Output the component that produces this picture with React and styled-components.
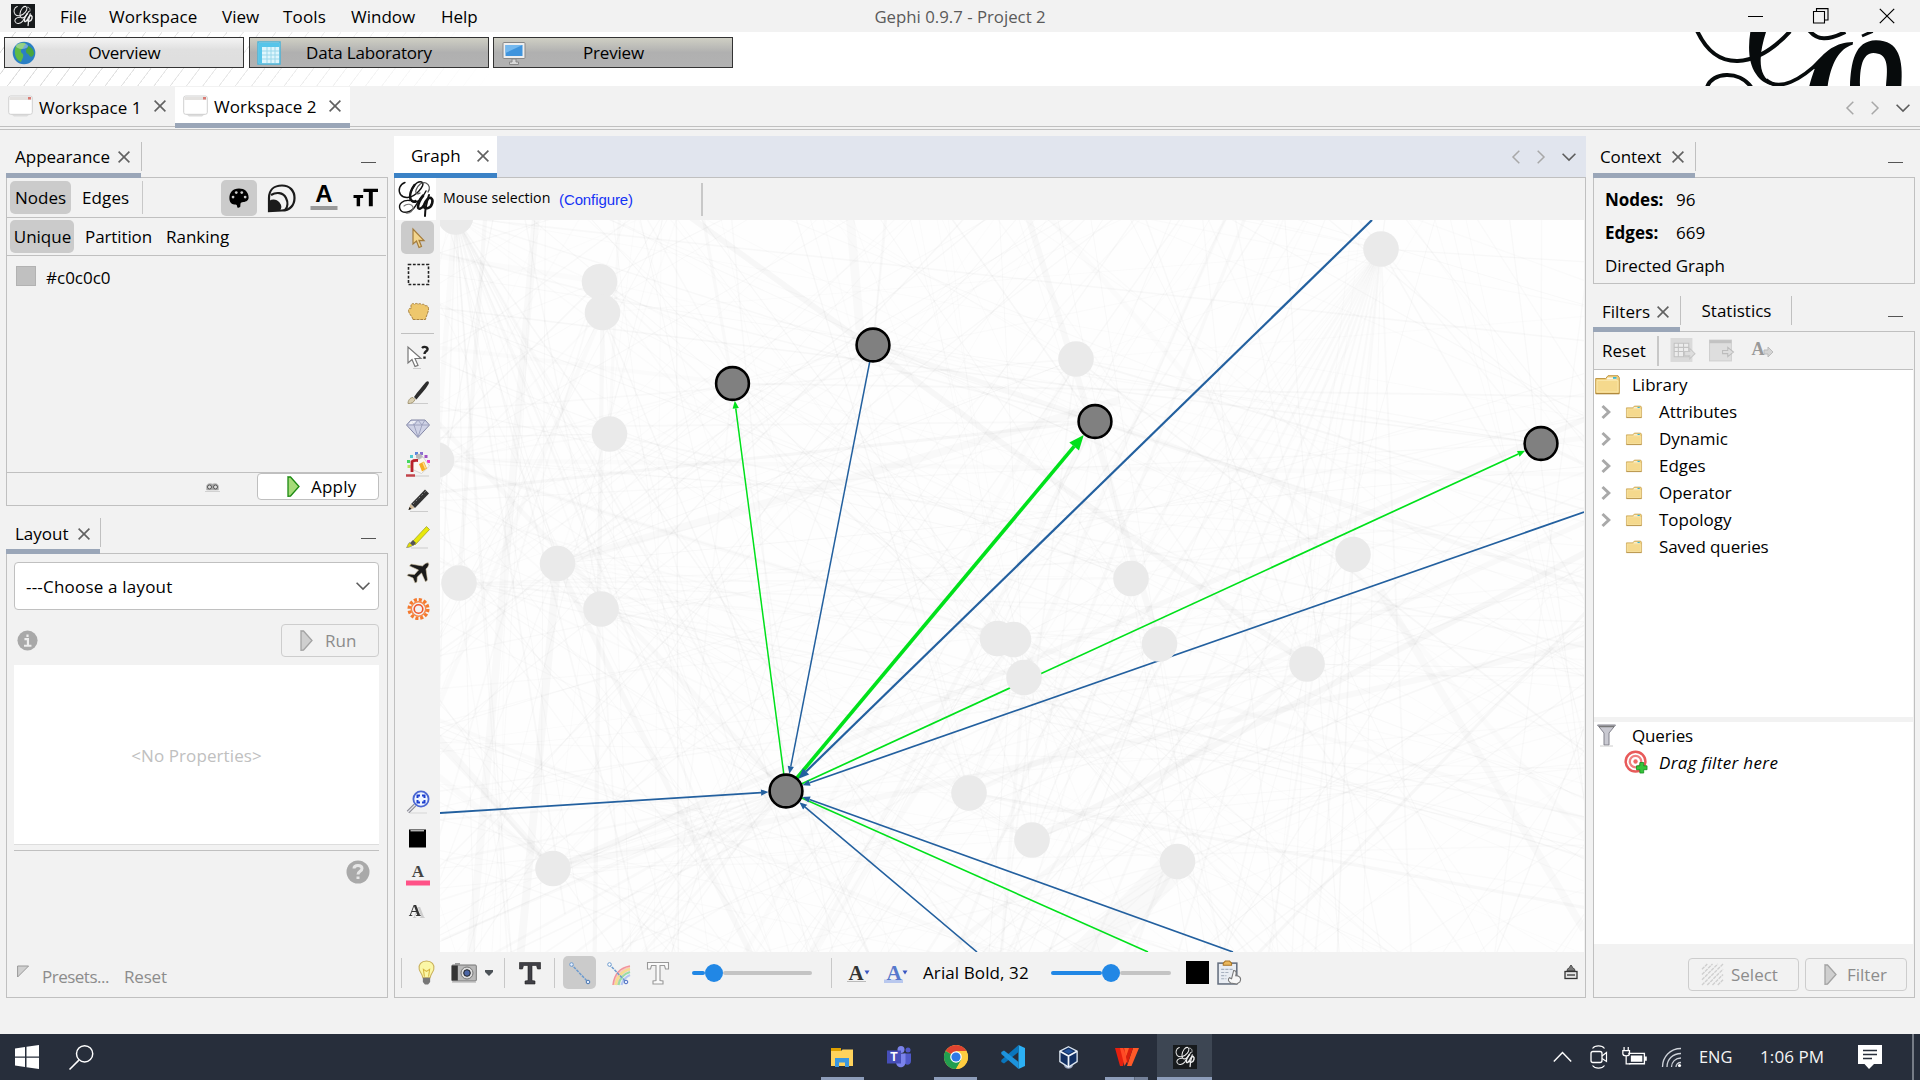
import React from 'react';
import styled, { createGlobalStyle, css } from 'styled-components';

const ui = '"Open Sans", "Noto Sans", sans-serif';
const line = '#c0c0c0';

const Global = createGlobalStyle`
  * { box-sizing: border-box; }
  body { margin: 0; background: #f2f2f2; overflow: hidden; }
  svg { display: block; flex: none; }
`;

const Screen = styled.div`
  width: 1920px;
  height: 1080px;
  display: flex;
  flex-direction: column;
  background: #f2f2f2;
  color: #000;
  font: 17px/24px ${ui};
  white-space: nowrap;
`;
const Label = styled.span`
  display: block;
  flex: none;
  width: ${p => (p.$w ? p.$w + 'px' : 'auto')};
  margin-left: ${p => p.$ml || 0}px;
  padding-top: ${p => p.$pt || 0}px;
  padding-bottom: ${p => p.$pb || 0}px;
  letter-spacing: ${p => p.$ls || 0}px;
  color: ${p => p.$c || 'inherit'};
  font-size: ${p => p.$size || 17}px;
  font-weight: ${p => (p.$bold ? 700 : 400)};
  font-style: ${p => (p.$italic ? 'italic' : 'normal')};
  text-align: ${p => p.$align || 'left'};
`;
const Icon = styled.svg.attrs(p => ({ viewBox: p.viewBox || '0 0 24 24', fill: 'none' }))`
  width: ${p => p.$s || 24}px;
  height: ${p => p.$h || p.$s || 24}px;
  margin-left: ${p => p.$ml || 0}px;
  overflow: visible;
`;
const Spacer = styled.div`flex: 1;`;

/* ---------- title bar, banner, workspaces ---------- */
const MenuBar = styled.header`
  height: 32px;
  flex: none;
  display: grid;
  grid-template-columns: 860px 200px 1fr;
  align-items: center;
`;
const Menus = styled.nav`display: flex; align-items: center; padding-left: 11px; height: 32px;`;
const WindowButtons = styled.div`display: flex; justify-content: flex-end; align-items: center; padding-right: 25px; gap: 50px;`;

const Banner = styled.div`
  height: 54px;
  flex: none;
  display: flex;
  justify-content: space-between;
  background:
    linear-gradient(90deg, rgba(255,255,255,0) 0, rgba(255,255,255,.35) 250px, #fff 490px),
    repeating-linear-gradient(127deg, #fff 0 11.7px, #ddd 12.2px 12.8px, #fff 13px);
`;
const Modes = styled.div`display: flex; padding: 5px 0 0 4px; gap: 4.5px;`;
const ModeButton = styled.button`
  width: 240px;
  height: 31px;
  display: grid;
  grid-template-columns: 30px 1fr 30px;
  align-items: center;
  padding: 0 5px 0 6px;
  border: 1.5px solid #333;
  font: 17px/24px ${ui};
  letter-spacing: -0.2px;
  color: #000;
  background: ${p => (p.$active ? 'linear-gradient(#f4f4f4, #e0e0e0 40%, #dedede)' : 'linear-gradient(#cfcfc4, #b0b0b0 50%, #b2b2b2)')};
`;
const BannerLogo = styled.svg`width: 220px; height: 54px; margin-right: 6px;`;

const WorkspaceBar = styled.div`
  height: 44px;
  flex: none;
  display: flex;
  padding-right: 10px;
  border-bottom: 1px solid ${line};
  box-shadow: inset 0 -1px #f2f2f2, inset 0 -2px #f2f2f2, inset 0 -3px ${line};
`;
const WorkspaceTab = styled.div`
  width: ${p => p.$w}px;
  height: 41px;
  margin-top: 1px;
  display: flex;
  align-items: center;
  padding: 0 0 3px 8px;
  ${p => p.$active && css`background: #fff; border-bottom: 5px solid #9aa6b8; padding: 2px 0 0 8px;`}
`;
const Pager = styled.div`display: flex; align-items: center; gap: 17px; padding-bottom: ${p => p.$pb || 0}px;`;

/* ---------- docked panels ---------- */
const Main = styled.main`
  height: 868px;
  flex: none;
  display: grid;
  grid-template-columns: 382px 1193px 322px;
  column-gap: 6px;
  padding: 6px 5px 0 6px;
`;
const Column = styled.div`display: flex; flex-direction: column; min-width: 0; margin-right: ${p => p.$mr || 0}px;`;
const TabStrip = styled.div`
  height: ${p => p.$h || 41}px;
  flex: none;
  display: flex;
  align-items: flex-end;
  background: ${p => p.$bg || 'transparent'};
`;
const Tab = styled.div`
  width: ${p => p.$w}px;
  height: ${p => p.$h || 36}px;
  margin-bottom: -1px;
  position: relative;
  flex: none;
  display: flex;
  align-items: center;
  padding: ${p => p.$pt || 0}px 0 ${p => p.$pb ?? 1}px ${p => p.$pl || 9}px;
  border-bottom: 5px solid ${p => p.$line || '#9aa6b8'};
  background: ${p => p.$bg || 'transparent'};
`;
const TabRule = styled.i`width: 1px; height: 29px; background: ${line}; margin: 0 0 6px; flex: none;`;
const Minimize = styled.i`width: 15px; height: 1px; background: #555; margin: 0 12px 14px auto;`;
const Frame = styled.section`
  height: ${p => p.$h}px;
  flex: none;
  display: flex;
  flex-direction: column;
  border: 1px solid ${line};
`;
const ToolRow = styled.div`
  height: ${p => p.$h}px;
  flex: none;
  display: flex;
  align-items: center;
  padding-left: ${p => p.$pl || 0}px;
  padding-top: ${p => p.$pt || 0}px;
  margin-right: ${p => p.$mr || 0}px;
  border-bottom: ${p => (p.$line ? `1px solid ${line}` : 'none')};
`;
const Toggle = styled.div`
  width: ${p => p.$w}px;
  height: ${p => p.$h || 33}px;
  flex: none;
  margin-left: ${p => p.$ml || 0}px;
  display: flex;
  align-items: center;
  justify-content: center;
  border-radius: 5px;
  background: ${p => (p.$on ? '#cbcbcb' : 'transparent')};
`;
const VRule = styled.i`width: ${p => p.$t || 1}px; height: ${p => p.$h || 33}px; flex: none; background: #c8c8c8; margin-left: ${p => p.$ml || 0}px;`;
const Swatch = styled.i`width: ${p => p.$s || 20}px; height: ${p => p.$s || 20}px; flex: none; background: ${p => p.$c}; margin-left: ${p => p.$ml || 0}px; border: ${p => (p.$edge ? '1px solid #b2b2b2' : 'none')};`;
const Button = styled.button`
  width: ${p => p.$w}px;
  height: ${p => p.$h}px;
  flex: none;
  margin-left: ${p => p.$ml || 0}px;
  display: flex;
  align-items: center;
  padding: 0 0 0 ${p => p.$pl}px;
  border: 1px solid ${p => (p.$off ? '#cdcdcd' : '#bfbfbf')};
  border-radius: 4px;
  background: ${p => (p.$off ? '#f2f2f2' : '#fff')};
  color: ${p => (p.$off ? '#8c8c8c' : '#000')};
  font: 17px/24px ${ui};
`;
const Select = styled.div`
  width: 365px;
  height: 48px;
  margin: 8px 0 0 7px;
  display: flex;
  align-items: center;
  justify-content: space-between;
  padding: 0 8px 0 11px;
  border: 1px solid ${line};
  border-radius: 4px;
  background: #fff;
`;
const Properties = styled.div`
  width: 365px;
  height: 180px;
  margin: 0 0 0 7px;
  display: flex;
  align-items: center;
  justify-content: center;
  padding-top: 3px;
  background: #fff;
  border-bottom: 1px solid #ddd;
`;
const HRule = styled.i`height: 1px; flex: none; width: ${p => p.$w}px; margin: ${p => p.$m || 0}; background: ${line};`;

/* ---------- graph ---------- */
const GraphBody = styled.div`height: 732px; flex: none; display: grid; grid-template-columns: 45px 1fr;`;
const ToolColumn = styled.div`display: flex; flex-direction: column; align-items: center; padding: 1px 0 22px 0;`;
const ToolSlot = styled.div`
  width: 33px;
  height: ${p => p.$h || 36.6}px;
  flex: none;
  display: flex;
  align-items: center;
  justify-content: center;
`;
const Canvas = styled.svg`width: 1144px; height: 732px; background: #fefefe;`;
const LogoTile = styled.div`width: 41px; height: 42px; background: #fff; display: flex; align-items: center; justify-content: center;`;
const ConfigLink = styled.a`font: 15px/24px "Liberation Sans", sans-serif; color: #1433f5; letter-spacing: -0.1px;`;
const SliderWrap = styled.div`display: flex; align-items: center; width: 120px; flex: none; margin-left: ${p => p.$ml}px;`;
const Rail = styled.i`height: 4px; border-radius: 2px; flex: ${p => (p.$w ? `0 0 ${p.$w}px` : 1)}; background: ${p => (p.$w ? '#2187e5' : '#c4c4c4')};`;
const Knob = styled.i`width: 18px; height: 18px; border-radius: 9px; background: #2187e5;`;
const SliderBar = ({ ml, v }) => <SliderWrap $ml={ml}><Rail $w={v - 9} /><Knob /><Rail /></SliderWrap>;
const Shadowed = styled.g`filter: drop-shadow(4px 2px 0 #cdcdcd);`;

/* ---------- right column ---------- */
const Facts = styled.dl`
  margin: 0;
  padding: 5px 0 0 11px;
  display: grid;
  grid-template-columns: 71px 1fr;
  grid-auto-rows: 33px;
  align-items: center;
`;
const PlainTab = styled.div`width: 110px; height: 36px; display: flex; align-items: center; justify-content: center; padding: 0 0 4px 1px;`;
const Tree = styled.div`height: ${p => p.$h}px; flex: none; background: #fff; margin: 0 1px ${p => p.$mb || 0}px 0; padding-top: ${p => p.$pt || 0}px;`;
const TreeRow = styled.div`height: 27px; display: grid; grid-template-columns: ${p => (p.$root ? '38px 1fr' : '30px 34px 1fr')}; align-items: center; padding-left: ${p => (p.$root ? 0 : 1)}px;`;
const Cell = styled.span`display: flex; padding-left: ${p => p.$pl || 0}px;`;

/* ---------- taskbar ---------- */
const Taskbar = styled.footer`
  height: 46px;
  margin-top: auto;
  flex: none;
  display: grid;
  grid-template-columns: 814px 732px 374px;
  background: #272e3b;
  color: #f4f4f4;
`;
const TaskGroup = styled.div`display: flex; align-items: center; height: 46px;`;
const Task = styled.div`
  width: ${p => p.$w || 57}px;
  height: 46px;
  display: flex;
  align-items: center;
  justify-content: center;
  background: ${p => (p.$active ? '#3d4653' : 'transparent')};
  background-image: ${p => (p.$run ? 'linear-gradient(#8d9dba, #8d9dba)' : p.$split ? 'linear-gradient(90deg, #8d9dba 0 29px, #5d6a7e 29px 30px, #748199 30px)' : 'none')};
  background-size: ${p => (p.$active ? 55 : 43)}px 3px;
  background-position: 50% 100%;
  background-repeat: no-repeat;
`;
const ShowDesktop = styled.i`width: 2px; height: 46px; background: #767c86; margin-left: auto; margin-right: 6px;`;

/* ---------- small glyphs ---------- */
const Cross = ({ s = 12, ml, c = '#616161', t = 1.6 }) => (
  <Icon $s={s} $ml={ml} viewBox="0 0 12 12"><path d="M.6.6 11.4 11.4M11.4.6.6 11.4" stroke={c} strokeWidth={t} /></Icon>
);
const Left = () => <Icon $s={8} $h={14} viewBox="0 0 8 14"><path d="M7.3.7 1 7l6.3 6.3" stroke="#a8a8a8" strokeWidth="1.5" /></Icon>;
const Right = () => <Icon $s={8} $h={14} viewBox="0 0 8 14"><path d="M.7.7 7 7 .7 13.3" stroke="#a8a8a8" strokeWidth="1.5" /></Icon>;
const Down = () => <Icon $s={14} $h={8} viewBox="0 0 14 8"><path d="M.6.7 7 7.1 13.4.7" stroke="#5c5c5c" strokeWidth="1.6" /></Icon>;
const GephiMark = ({ s = 36 }) => (
  <Icon $s={s} viewBox="0 0 36 36">
    <g stroke="#111" strokeLinecap="round">
      <path d="M7 1.5C2 3-.5 9 2.500 13.500c4 5 12 3.500 18-3 4-4.500 6-8 3-9.500-5-1.500-10 6-11.500 13-.6 5 2 8 6 7 4-1 8-7 10-11" strokeWidth="1.4" />
      <path d="M16.500 4c-3 4-5 10-4 14 1 2 3 3 5 2" strokeWidth="2.4" />
      <path d="M30 11c2.500-3 1.500-7.500-2-9-4-1.500-8 2-10 7-1 3 1 5 4 3" strokeWidth="1.2" stroke="#555" />
      <path d="M12 19.500C5 18.500 0 23 2 28c2 5 10 4 14-1 3-4 6-10 9-13" strokeWidth="1.4" />
      <path d="M6 25c3-3 8-2 9 1s-3 7-7 6" strokeWidth="1.1" stroke="#777" />
      <path d="M25 15c-3 3-5 9-5 11 0 3 4 2 6-2 2-5 5-8 7-7 3 2 1 9-3 10-2 .6-4 0-4-2" strokeWidth="2.6" />
      <path d="M31 14c-2 6-4 13-4 21" strokeWidth="2" />
    </g>
  </Icon>
);
const AppIcon = ({ ml }) => (
  <Icon $s={24} $ml={ml}>
    <rect width="24" height="24" fill="#171a1c" />
    <g transform="translate(2.5 2) scale(.54 .56)" stroke="#eee" strokeLinecap="round">
      <path d="M7 1C1 3-1 10 3 15c5 5 14 2 19-4 3-4 4-8 1-10-5-2-10 6-11 13-.6 5 2 8 6 7 4-1 8-7 10-11" strokeWidth="1.8" />
      <path d="M12 20C5 20 1 24 3 28c2 5 10 4 14-1 3-4 6-11 9-14" strokeWidth="1.8" />
      <path d="M30 10c2-4 0-8-4-8" strokeWidth="1.3" />
      <path d="M25 14c-3 4-5 10-5 12 0 3 4 2 6-2 2-5 5-8 7-7 3 2 1 9-3 10-2 .6-4 0-4-2" strokeWidth="2.6" />
      <path d="M31 14c-2 6-4 13-4 21" strokeWidth="2.4" />
    </g>
  </Icon>
);
const Play = ({ off, ml }) => (
  <Icon $s={13} $h={21} $ml={ml} viewBox="0 0 13 21">
    <path d="M1 .8 3.500 1 12 10.500 3.500 20 1 20.200Z" fill={off ? '#cfcfcf' : '#a5db78'} stroke={off ? '#a3a3a3' : '#1c8a12'} strokeWidth="1.3" />
  </Icon>
);
const WorkspaceIcon = () => (
  <Icon $s={25} $h={22} viewBox="0 0 25 22">
    <path d="M3 19h19l-3 2.600H6z" fill="#dcdcdc" />
    <rect x=".7" y="1" width="23.600" height="18.300" rx="2" fill="#fff" stroke="#d0d0d0" />
    <path d="M1.500 2h22v3h-22z" fill="#e4e2e0" /><path d="M20 2h3v2.500h-3z" fill="#d97b74" />
  </Icon>
);
const Folder = ({ big }) => (
  <Icon $s={big ? 25 : 16} $h={big ? 20 : 14} viewBox="0 0 25 20">
    <path d="M.7 18V3.500h10L13 .7h10l1.300 2V18.500H.7z" fill="#f0cf7c" stroke="#c29a49" />
    <path d="M12.500 2.500h9v2h-10z" fill="#fdf8e6" /><path d="M18 2h3.500v1.800H18z" fill="#3db6cf" />
    <path d="M2 5.500h21v11.500H2z" fill="#f5d98d" stroke="#f9e6a9" /><path d="M.7 18.800h23.600" stroke="#a98238" />
  </Icon>
);
const Chevron = () => <Icon $s={10} $h={14} viewBox="0 0 10 14"><path d="M1.500 1 7.800 7 1.500 13" stroke="#a9a9a9" strokeWidth="3" /></Icon>;

const Letter = ({ ch, x = 12, y = 19, size = 21, fill = '#333', family = 'Liberation Serif' }) => (
  <text x={x} y={y} fontSize={size} fill={fill} textAnchor="middle" fontFamily={family} fontWeight="700">{ch}</text>
);

const tools = {
  pointer: <path d="M7 3v15l3.500-3 2.500 6.500 2.500-1-2.500-6.200 5 .2z" fill="#f3d58d" stroke="#a47c3c" strokeWidth="1.2" />,
  marquee: <path d="M2.500 2.500h20v20h-20z" stroke="#222" strokeWidth="1.6" strokeDasharray="2.8 1.6" />,
  hand: <path d="M7 20.500c-.5-3-4-5-4.500-9C2.500 9.500 4 9 5 10V6c1-2 3-1.500 3.500-.5 1-1.500 3-1.300 3.500 0 1-1.300 3-1 3.500.3 1.500-1 3-.5 3.500 1 2.500-.7 3.500 1 3.500 3 0 4-2.500 7-3 10.700z" fill="#eec76d" stroke="#a98342" strokeWidth="1" strokeDasharray="3 .8" />,
  ask: <><path d="M2 3v16l4-3.500 3 7 3-1.200-3-6.800h6z" fill="#fff" stroke="#777" strokeWidth="1.2" /><path d="M16 4c2-2 6-1 5.500 1.500-.3 2-3 1.800-3 4.500M18.500 12.500v2.300" stroke="#222" strokeWidth="2.4" /><path d="M7 24.500h8" stroke="#ccc" /></>,
  brush: <><path d="M5 23.500h17" stroke="#ccc" /><path d="M2 23.500c0-3 2-6 5-6l2 2c-1 3-4 4.300-7 4z" fill="#d9cfb2" stroke="#96875f" strokeWidth=".8" /><path d="M8 17c4-6 8-10 12-15 2-2 4 0 2.300 2.500C19 10 15 14 10.500 19.500z" fill="#2d2d2d" /></>,
  diamond: <><path d="M5 4h14l4.500 5L12 21.500.5 9z" fill="#cfd2e6" stroke="#8286a5" strokeWidth="1" /><path d="M1 9h22M5 4l3 5 4-5 4 5 3-5M8 9l4 12 4-12" stroke="#9a9ebb" strokeWidth=".9" /><path d="M5 5h5L7 8H3z" fill="#fff" opacity=".7" /></>,
  painter: <>
    <g>
      <rect x="9" y="0" width="3" height="3" fill="#5b86de" /><rect x="14" y="0" width="3" height="3" fill="#8b6fd0" />
      <rect x="4" y="3" width="3" height="3" fill="#4fc9d2" /><rect x="18.500" y="3" width="3" height="3" fill="#a04fc4" />
      <rect x="1" y="8" width="3" height="3" fill="#43d860" /><rect x="21" y="8" width="3" height="3" fill="#e73fc4" />
      <rect x="1.500" y="13" width="3" height="3" fill="#b6e25c" />
      <path d="M10 3c2-2 5-2 7 2l-2 3-5-2z" fill="#b8b8b8" />
    </g>
    <path d="m7 11 10-6 6.500 9-8 7.500-9-4z" fill="#fbf8f2" stroke="#ccc" strokeWidth=".8" />
    <path d="m13 12 5-2.500 3 7-5 3z" fill="#f5ae25" /><path d="m17 10.500 2.500 6" stroke="#fbe09a" strokeWidth="1.5" />
    <path d="M6 20V9.500c2-1.500 4-1 6-1" stroke="#b8232a" strokeWidth="2.8" /><path d="M0 23.500h9" stroke="#c2434a" strokeWidth="2.5" /><path d="M9 24h14" stroke="#ccc" />
  </>,
  pencil: <><path d="M4 23.500h18" stroke="#ccc" /><path d="m2.500 22 2-6 4 4z" fill="#cfb794" /><path d="M2.500 22l1-3 2 2z" fill="#111" /><path d="M5 16 19 1.500l4 4L9 20z" fill="#333" /><path d="m7 16 13-13" stroke="#888" strokeDasharray="2 2" /></>,
  marker: <><path d="M5 23h17" stroke="#ccc" /><path d="M.5 22.500c1-1 1-3 3-5l3 3c-2 1.500-4 2-6 2z" fill="#e3dd00" stroke="#777" strokeWidth=".6" /><path d="M6 17 20.500 1.500l3 3L9 20z" fill="#e8e80b" stroke="#a3a32b" strokeWidth=".8" /><path d="m4 18 3-3 3 3-3 3z" fill="#555" /></>,
  plane: <path d="M22.500 2c-2-.6-4 1-6 3L5 3 3.500 5l9 4-4 4.500-6-.5L1 14.500l6 2.500 2 5 2-1 .3-5 4.200-4 4 9 2-2-1.500-11C22 6 23.500 4 22.500 2z" fill="#1a1a1a" stroke="#d9c9a8" strokeWidth=".6" />,
  sun: <><circle cx="12.500" cy="12" r="9.300" stroke="#f47a2e" strokeWidth="3.5" strokeDasharray="3 1.870" /><circle cx="12.500" cy="12" r="7.200" stroke="#f58a4e" strokeWidth="1.5" /><circle cx="12.500" cy="12" r="4.300" stroke="#f0552a" strokeWidth="1.6" /></>,
  magnify: <><path d="M4 23h17" stroke="#d6d6d6" /><path d="m2 22 7-7" stroke="#8c8c96" strokeWidth="3.5" /><path d="m2 22 7-7" stroke="#e4e4ea" strokeWidth="1.3" /><circle cx="15" cy="9" r="7.600" fill="#eef4ff" stroke="#4a66d2" strokeWidth="1.8" /><path d="M11.500 8V5.500H14M16 5.500h2.500V8M18.500 10v2.500H16M14 12.500h-2.500V10" stroke="#1d3fd0" strokeWidth="2" /></>,
  black: <><path d="M3 2.500h17v18H3z" fill="#000" /><path d="M4.500 3.800H18" stroke="#fff" /></>,
  pinkA: <><Letter ch="A" y="14" size="17" fill="#444" /><path d="M0 17.500h24v5H0z" fill="#ff5287" /></>,
  shadowA: <Shadowed><Letter ch="A" x="9" y="16" size="17" fill="#333" /></Shadowed>,
};
const Tool = ({ name, h }) => <ToolSlot $h={h}><Icon>{tools[name]}</Icon></ToolSlot>;

/* ---------- graph data ---------- */
const HUB = [786, 791];
const faded = [
  [455.5, 217], [599.5, 281.7], [602.5, 312.5], [609.5, 434], [436.5, 460], [1381, 249], [1076, 359],
  [557.5, 563.5], [459, 583], [601, 609], [1131, 578.5], [997.5, 638.5], [1013.5, 639.5], [1024, 677.5],
  [1159.5, 644], [1353, 554.5], [1307, 664], [969, 793], [1032, 840], [1177.5, 861.5], [553, 868.5],
];
const active = [[873, 345], [732.5, 383.5], [1095, 421.5], [1541, 443.5], HUB];
const GREEN = '#00e11b';
const BLUE = '#23609f';
const links = [
  { from: HUB, to: [732.5, 383.5], c: GREEN, w: 1.5 },
  { from: HUB, to: [1095, 421.5], c: GREEN, w: 3.6 },
  { from: HUB, to: [1541, 443.5], c: GREEN, w: 1.7 },
  { from: [1148, 952], to: HUB, c: GREEN, w: 1.6, plain: true },
  { from: [873, 345], to: HUB, c: BLUE, w: 1.5 },
  { from: [1372, 220], to: HUB, c: BLUE, w: 2.2, head: 1.4 },
  { from: [1584, 512], to: HUB, c: BLUE, w: 1.7 },
  { from: [440, 813], to: HUB, c: BLUE, w: 1.8 },
  { from: [977, 952], to: HUB, c: BLUE, w: 1.6 },
  { from: [1233, 952], to: HUB, c: BLUE, w: 1.7 },
];
const Link = ({ from, to, c, w, plain, head = 1 }) => {
  const len = Math.hypot(to[0] - from[0], to[1] - from[1]);
  const ux = (to[0] - from[0]) / len;
  const uy = (to[1] - from[1]) / len;
  const tx = to[0] - ux * 17.5;
  const ty = to[1] - uy * 17.5;
  const size = (w > 3 ? 15 : 7.5) * head;
  const bx = tx - ux * size;
  const by = ty - uy * size;
  const half = size * 0.42;
  return (
    <g>
      <line x1={from[0]} y1={from[1]} x2={plain ? to[0] : bx} y2={plain ? to[1] : by} stroke={c} strokeWidth={w} />
      {!plain && <polygon fill={c} points={`${tx},${ty} ${bx - uy * half},${by + ux * half} ${bx + uy * half},${by - ux * half}`} />}
    </g>
  );
};
const backdrop = (() => {
  let seed = 4711;
  const rnd = () => (seed = (seed * 16807) % 2147483647) / 2147483647;
  const far = [
    [520, 1500], [380, 1200], [250, 1050], [640, -150], [900, -300], [1480, -200], [1350, -80], [1900, 330], [1800, 520],
    [1750, 640], [1850, 900], [1700, 1250], [1300, 1400], [950, 1300], [100, 820], [150, 500], [200, 250], [430, 0], [640, 1250], [1460, 1150],
  ];
  const near = faded.concat(active);
  const out = [];
  const push = (a, b, w, o) => out.push({ a, b, w, o });
  near.forEach(n => {
    for (let i = 0; i < 9; i++) {
      const f = far[Math.floor(rnd() * far.length)];
      push(n, [f[0] + (rnd() - 0.5) * 160, f[1] + (rnd() - 0.5) * 160], rnd() > 0.88 ? 3 + rnd() * 4 : 1 + rnd(), 0.013 + rnd() * 0.014);
    }
    for (let i = 0; i < 2; i++) push(n, near[Math.floor(rnd() * near.length)], 1 + rnd(), 0.016);
  });
  for (let i = 0; i < 260; i++) {
    const a = far[Math.floor(rnd() * far.length)];
    const b = far[Math.floor(rnd() * far.length)];
    push([a[0] + (rnd() - 0.5) * 380, a[1] + (rnd() - 0.5) * 380], [b[0] + (rnd() - 0.5) * 380, b[1] + (rnd() - 0.5) * 380], rnd() > 0.94 ? 3 + rnd() * 4 : 1 + rnd() * 0.6, 0.012 + rnd() * 0.014);
  }
  for (let i = 0; i < 12; i++) push([455.5, 217], [430 + i * 45, 900 + rnd() * 200], 1 + rnd() * 1.5, 0.022);
  for (let i = 0; i < 14; i++) push([1381, 249], [700 + i * 55, 1150 - i * 8], 1 + rnd() * 2, 0.02);
  for (let i = 0; i < 10; i++) push(HUB, [430 + rnd() * 30, 820 + i * 40], 1 + rnd() * 2, 0.02);
  push([1177.5, 861.5], [1075, 965], 30, 0.018);
  push([557.5, 563.5], [520, 960], 8, 0.025);
  push([557.5, 563.5], [1120, 400], 8, 0.02);
  push([536, 215], [470, 960], 8, 0.02);
  push([850, 215], [860, 330], 9, 0.02);
  push([1380, 590], [1584, 930], 8, 0.018);
  return out;
})();

const NetworkCanvas = () => (
  <Canvas viewBox="440 220 1144 732">
    {backdrop.map((e, i) => <line key={i} x1={e.a[0]} y1={e.a[1]} x2={e.b[0]} y2={e.b[1]} stroke="#000" strokeOpacity={e.o} strokeWidth={e.w} />)}
    {links.map((l, i) => <Link key={i} {...l} />)}
    {faded.map(([x, y]) => <circle key={x + '-' + y} cx={x} cy={y} r="17.8" fill="#eaeaea" />)}
    {active.map(([x, y]) => <circle key={x + '-' + y} cx={x} cy={y} r="16.4" fill="#808080" stroke="#000" strokeWidth="2.6" />)}
  </Canvas>
);

/* ---------- sections ---------- */
const Appearance = () => (
  <>
    <TabStrip>
      <Tab $w={135}><Label $w={103}>Appearance</Label><Cross /></Tab>
      <TabRule />
      <Minimize />
    </TabStrip>
    <Frame $h={329}>
      <ToolRow $h={40} $pl={3} $mr={1} $line>
        <Toggle $w={61} $on><Label>Nodes</Label></Toggle>
        <Label $ml={11} $w={60} $ls={0.1}>Edges</Label>
        <VRule />
        <Toggle $w={36} $h={36} $ml={78} $on>
          <Icon $s={22}><path d="M12 1.500C5 1.500 1.500 6 1.500 12c0 5 3 7.500 6 7 2-.3 2.500 1 2.500 2.500s3 1.500 3.500-.5c.3-2-.5-4 2-4.500 3 0 7-1 7-5C22.500 5 18 1.500 12 1.500z" fill="#000" /><g fill="#cbcbcb"><circle cx="5.500" cy="11" r="1.500" /><circle cx="9" cy="6" r="1.500" /><circle cx="15" cy="6" r="1.500" /><circle cx="18.700" cy="11" r="1.500" /></g></Icon>
        </Toggle>
        <Icon $s={28} $ml={11} viewBox="0 0 28 28"><path d="M1 27V14C1 6 6 1.500 14 1.500S26.500 7 26.500 14 22 26.500 14 26.500z" stroke="#1b1b1b" strokeWidth="2.2" /><path d="M3 11c5-3 12-3 15 3 2 4 2 9-1 12" stroke="#1b1b1b" strokeWidth="2.2" /><path d="M1 27V17c4-2.500 8-1.500 10.500 1.500s2.500 6 0 8.500z" fill="#1b1b1b" /></Icon>
        <Icon $s={28} $ml={14} viewBox="0 0 28 28"><Letter ch="A" x="14" y="18" size="24" fill="#000" family="Liberation Sans" /><path d="M.5 22h27v4H.5z" fill="#999" /></Icon>
        <Icon $s={25} $ml={15}><path d="M10 3.500h14v3.300h-5V20.500h-3.800V6.800H10zM.5 9.500h9.200v3H6.800v8H3.500v-8h-3z" fill="#000" /></Icon>
      </ToolRow>
      <ToolRow $h={38} $pl={3} $mr={1} $line>
        <Toggle $w={64} $on><Label $ml={1}>Unique</Label></Toggle>
        <Label $ml={11} $w={81} $ls={-0.1}>Partition</Label>
        <Label>Ranking</Label>
      </ToolRow>
      <ToolRow $h={40} $pl={9}><Swatch $c="#c0c0c0" $edge /><Label $ml={10} $pt={3}>#c0c0c0</Label></ToolRow>
      <Spacer />
      <HRule $w={375} />
      <ToolRow $h={27} $pl={198}>
        <Icon $s={15} $h={10} viewBox="0 0 15 10"><path d="M0 9.500h15M1.500 8V4c1-3 4-3 6-2 2-1 5-1 6 2v4z" fill="#a5a5a5" stroke="#bbb" strokeWidth=".6" /><circle cx="4.500" cy="5" r="2" fill="#ddd" stroke="#555" /><circle cx="10.500" cy="5" r="2" fill="#ddd" stroke="#555" /></Icon>
        <Button $w={122} $h={27} $ml={37} $pl={29}><Play /><Label $ml={11} $ls={0.2} $pt={1}>Apply</Label></Button>
      </ToolRow>
      <ToolRow $h={5} />
    </Frame>
  </>
);

const LayoutPanel = () => (
  <>
    <TabStrip $h={47}>
      <Tab $w={94} $pt={1}><Label $w={63}>Layout</Label><Cross /></Tab>
      <TabRule />
      <Minimize />
    </TabStrip>
    <Frame $h={445}>
      <Select><Label $pt={1} $ls={0.2}>---Choose a layout</Label><Down /></Select>
      <ToolRow $h={55} $pl={10} $pt={6}>
        <Icon $s={21}><circle cx="12" cy="12" r="11.5" fill="#a9a9a9" /><path d="M12 5v3M8.500 10.500h4V18M8 18h8.500" stroke="#eee" strokeWidth="2.5" /></Icon>
        <Button $w={98} $h={33} $ml={243} $pl={18} $off><Play off /><Label $ml={12}>Run</Label></Button>
      </ToolRow>
      <Properties><Label $c="#c0c0c0" $ls={0.1}>&lt;No Properties&gt;</Label></Properties>
      <HRule $w={365} $m="5px 0 0 7px" />
      <ToolRow $h={42} $pl={339}>
        <Icon $s={24}><circle cx="12" cy="12" r="11.5" fill="#a9a9a9" /><path d="M8 8.500c0-4 8-4 8 0 0 3-4 2.500-4 6M12 16.500V19" stroke="#e6e6e6" strokeWidth="3" /></Icon>
      </ToolRow>
      <Spacer />
      <ToolRow $h={40} $pl={10}>
        <Icon $s={12} $h={25} viewBox="0 0 12 25"><path d="M.6 1h11L.6 12z" fill="#d0d0d0" stroke="#999" /></Icon>
        <Label $ml={13} $w={82} $ls={-0.5} $c="#8c8c8c">Presets...</Label>
        <Label $c="#8c8c8c" $ls={-0.2}>Reset</Label>
      </ToolRow>
    </Frame>
  </>
);

const GraphPanel = () => (
  <Column $mr={1}>
    <TabStrip $bg="#e1e5ee">
      <Tab $w={103} $h={42} $pl={17} $bg="#fff" $line="#3b82c6" $pb={0} $pt={2}><Label $w={66}>Graph</Label><Cross /></Tab>
      <Spacer />
      <Pager $pb={13}><Left /><Right /><Down /></Pager>
      <Label $w={10} />
    </TabStrip>
    <Frame $h={821}>
      <ToolRow $h={42}>
        <LogoTile><GephiMark s={36} /></LogoTile>
        <Label $ml={7} $w={116} $size={14.2} $pb={3}>Mouse selection</Label>
        <Label $w={142}><ConfigLink>(Configure)</ConfigLink></Label>
        <VRule $t={2} />
      </ToolRow>
      <GraphBody>
        <ToolColumn>
          <Toggle $w={33} $on><Icon>{tools.pointer}</Icon></Toggle>
          <Tool name="marquee" h={40} /><Tool name="hand" h={33} />
          <HRule $w={33} $m="6px 0 4px" />
          {['ask', 'brush', 'diamond', 'painter', 'pencil', 'marker', 'plane', 'sun'].map(n => <Tool key={n} name={n} h={36.1} />)}
          <Spacer />
          {['magnify', 'black', 'pinkA', 'shadowA'].map(n => <Tool key={n} name={n} h={36.5} />)}
        </ToolColumn>
        <NetworkCanvas />
      </GraphBody>
      <ToolRow $h={41} $pl={6}>
        <VRule $h={30} />
        <Icon $ml={12} $s={25}><path d="M12 1c-5 0-8 3.500-7 8 .7 3 3 4 3.500 8h7c.5-4 2.800-5 3.500-8 1-4.500-2-8-7-8z" fill="#fbf7a6" stroke="#c9b05a" /><path d="M10 16 9 9l3 2 3-2-1 7" stroke="#d6b53e" /><path d="M8.500 17h7v4l-2 2.500h-3l-2-2.500z" fill="#777" /></Icon>
        <Icon $ml={12} $s={26} $h={22} viewBox="0 0 26 22"><rect x=".8" y="3" width="24.500" height="16" rx="1" fill="#b9b9b9" stroke="#777" /><path d="M.8 3.500h6v15h-6z" fill="#333" /><path d="M4 3V1h5v2" fill="#999" /><circle cx="16" cy="11" r="6" fill="#ddd" stroke="#777" /><circle cx="16" cy="11" r="3.300" fill="#4c66a5" stroke="#222" /><path d="M1 20.500h24" stroke="#ccc" /></Icon>
        <Icon $ml={8} $s={8} $h={6} viewBox="0 0 8 6"><path d="M0 0h8v2L4 6 0 2z" fill="#4d5358" /></Icon>
        <VRule $h={30} $ml={11} />
        <Icon $ml={13}><path d="M1.500 1.500h21v6.500h-3l-1-3.500H14v15l3 .5v3H7v-3l3-.5v-15H5.500l-1 3.500h-3z" fill="#3f3f46" stroke="#222" strokeWidth=".6" /></Icon>
        <VRule $h={30} $ml={12} />
        <Toggle $w={33} $ml={8} $on><Icon><path d="m3 3 17 18" stroke="#6c9bcf" strokeWidth="1.5" strokeDasharray="3 1" /><circle cx="3.500" cy="3.500" r="1.800" fill="#e5efff" stroke="#6c9bcf" /><circle cx="20" cy="21" r="1.800" fill="#e5efff" stroke="#4674b0" /></Icon></Toggle>
        <Icon $ml={10}><path d="M7 24C8 15 14 8 24 5v5c-7 1-11 7-12 14z" fill="#f8c9bd" /><path d="M9.500 24c1-7 6-14 14.500-16" stroke="#f4e08c" strokeWidth="2.3" /><path d="M12.500 24c1-6 5-11 11.500-13" stroke="#9bdca5" strokeWidth="2.3" /><path d="M15.500 24c1-4 4-8 8.500-10" stroke="#b3c6f1" strokeWidth="2.3" /><path d="M7 24C8 15 13 7 24 5" stroke="#f2939a" strokeWidth="1.5" /><path d="m3 3 17 18" stroke="#6c9bcf" strokeDasharray="3 1" strokeWidth="1.5" /><circle cx="3.500" cy="3.500" r="1.800" fill="#fff" stroke="#6c9bcf" /><circle cx="20" cy="21" r="1.800" fill="#e5efff" stroke="#4c6cc0" /></Icon>
        <Icon $ml={16}><path d="M1.500 1.500h21v6.500h-3l-1-3.500H14v15l3 .5v3H7v-3l3-.5v-15H5.500l-1 3.500h-3z" fill="#fafafa" stroke="#999" strokeWidth="1.1" /></Icon>
        <SliderBar ml={22} v={22} />
        <VRule $h={30} $ml={19} />
        <Icon $ml={14}><Letter ch="A" x="10" y="19" size="21" /><path d="M1 20.500h19" stroke="#bbb" /><path d="M18.500 9.500h5l-2.500 4z" fill="#3a57c2" /></Icon>
        <Icon $ml={14}><path d="M0 18.500h19v3.500H0z" fill="#b9c8ee" /><Letter ch="A" x="10" y="19" size="21" fill="#5778cc" /><path d="M18.500 9.500h5l-2.500 4z" fill="#3a57c2" /></Icon>
        <Label $ml={15} $w={128} $ls={0.1}>Arial Bold, 32</Label>
        <SliderBar ml={0} v={60} />
        <Swatch $s={23} $c="#000" $ml={15} />
        <Icon $ml={8} $s={25}><rect x="1" y="3" width="18" height="20" fill="#e9edf3" stroke="#667080" strokeWidth="1.5" /><path d="M6 5V3l2-2h4l2 2v2z" fill="#eab75b" stroke="#a97425" /><path d="M4 9h11M4 12h8M4 15h5M4 18h5" stroke="#a8b2c0" strokeDasharray="3 1" /><path d="M13 22c-2-2-3-3-1-5l2 1 2-8c2 0 3 1 2 5 3 0 6 2 4 6l-3 2z" fill="#f7f7f7" stroke="#777" /></Icon>
        <Spacer />
        <Icon $s={14} $h={17} viewBox="0 0 14 17"><path d="M3 7c0-3 3-3 4-6 1 3 4 3 4 6z" fill="#777" stroke="#444" /><rect x="1" y="7.500" width="12" height="7" fill="#e5e5e5" stroke="#333" strokeWidth="1.3" /><path d="M3 11h8" stroke="#333" strokeWidth="1.3" /></Icon>
        <Label $w={7} />
      </ToolRow>
    </Frame>
  </Column>
);

const RightColumn = () => (
  <Column>
    <TabStrip>
      <Tab $w={102} $pl={7}><Label $w={72} $ls={-0.1}>Context</Label><Cross /></Tab>
      <TabRule /><Minimize />
    </TabStrip>
    <Frame $h={107}>
      <Facts>
        <Label $bold>Nodes:</Label><Label>96</Label>
        <Label $bold>Edges:</Label><Label>669</Label>
        <Label $ls={-0.1}>Directed Graph</Label>
      </Facts>
    </Frame>
    <TabStrip $h={47}>
      <Tab $w={87} $pl={9} $pt={1}><Label $w={55}>Filters</Label><Cross /></Tab>
      <TabRule />
      <PlainTab>Statistics</PlainTab>
      <TabRule /><Minimize />
    </TabStrip>
    <Frame $h={667}>
      <ToolRow $h={38} $pl={8} $mr={1} $line>
        <Label $w={55}>Reset</Label>
        <VRule $t={2} $h={30} />
        <Icon $ml={11} $s={25}><rect x=".5" y="0" width="21" height="23" fill="#dadada" /><path d="M4 5h14v13H4zM4 9h14M4 13h14M8 5v13M13 5v13" stroke="#c2c2c2" fill="#ececec" /><path d="M14 13h5v-3l5 5-5 5v-3h-5z" fill="#ddd" stroke="#c6c6c6" /></Icon>
        <Icon $ml={14} $s={25}><rect x=".5" y="2" width="21" height="20" fill="#dedede" stroke="#cfcfcf" /><path d="M.5 2h21v3H.5z" fill="#c2c2c2" /><path d="M13 12h5V9l5.500 4.500L18 18v-3h-5z" fill="#ddd" stroke="#bcbcbc" /></Icon>
        <Icon $ml={17}><Letter ch="A" x="7" y="16" size="18" fill="#999" /><path d="M13 11h4V8l5 5-5 5v-3h-4z" fill="#d5d5d5" stroke="#bbb" /></Icon>
      </ToolRow>
      <Tree $h={347} $mb={5} $pt={1}>
        <TreeRow $root><Cell $pl={1}><Folder big /></Cell><Label>Library</Label></TreeRow>
        {['Attributes', 'Dynamic', 'Edges', 'Operator', 'Topology'].map(t => (
          <TreeRow key={t}><Cell $pl={6}><Chevron /></Cell><Cell $pl={1}><Folder /></Cell><Label $ls={t === 'Attributes' ? -0.05 : 0}>{t}</Label></TreeRow>
        ))}
        <TreeRow><Cell /><Cell $pl={1}><Folder /></Cell><Label $ls={-0.1}>Saved queries</Label></TreeRow>
      </Tree>
      <Tree $h={222}>
        <TreeRow $root><Cell $pl={3}><Icon $s={19} $h={23} viewBox="0 0 19 23"><path d="M.5 1h18L12 9v12H7V9z" fill="#c9c9d1" stroke="#82828c" /><path d="M2 2.500h15" stroke="#777" strokeWidth="1.5" /><path d="M3 22h13" stroke="#ccc" /></Icon></Cell><Label $ls={-0.15}>Queries</Label></TreeRow>
        <TreeRow><Cell /><Cell><Icon $s={23}><circle cx="11" cy="11" r="10.3" fill="#fff" stroke="#e85a5a" strokeWidth="2.6" /><circle cx="11" cy="11" r="6" stroke="#ef8080" strokeWidth="2.4" /><circle cx="11" cy="11" r="2.3" fill="#e66" /><path d="M15.500 12h4v3.500H23v4h-3.500V23h-4v-3.500H12v-4h3.500z" fill="#35c43a" stroke="#128a1c" strokeWidth=".8" /></Icon></Cell><Label $italic $ls={0.36}>Drag filter here</Label></TreeRow>
      </Tree>
      <Spacer />
      <ToolRow $h={33} $pl={94}>
        <Button $w={111} $h={33} $pl={13} $off>
          <Icon $s={21}><path d="M0 6 6 0M0 12 12 0M0 18 18 0M0 24 24 0M6 24 24 6M12 24 24 12M18 24l6-6" stroke="#cfcfcf" strokeWidth="1.6" strokeDasharray="4 1" /></Icon>
          <Label $ml={8}>Select</Label>
        </Button>
        <Button $w={102} $h={33} $ml={6} $pl={18} $off><Play off /><Label $ml={10}>Filter</Label></Button>
      </ToolRow>
      <ToolRow $h={6} />
    </Frame>
  </Column>
);

export default function App() {
  return (
    <Screen>
      <Global />
      <MenuBar>
        <Menus>
          <AppIcon />
          <Label $ml={25} $w={49} $pt={1}>File</Label>
          <Label $w={113} $pt={1} $ls={0.1}>Workspace</Label>
          <Label $w={61} $pt={1}>View</Label>
          <Label $w={68} $pt={1} $ls={0.15}>Tools</Label>
          <Label $w={90} $pt={1}>Window</Label>
          <Label $pt={1}>Help</Label>
        </Menus>
        <Label $align="center" $c="#5a5a5a" $size={16.8} $pt={1}>Gephi 0.9.7 - Project 2</Label>
        <WindowButtons>
          <Icon $s={15} viewBox="0 0 15 15"><path d="M0 7.500h15" stroke="#000" /></Icon>
          <Icon $s={16} viewBox="0 0 16 16"><path d="M.5 3.500h11v11.500H.5zM3.500 3.500V.6h11.500V12h-3.500" stroke="#000" strokeWidth="1.1" /></Icon>
          <Cross s={16} c="#000" t={0.9} />
        </WindowButtons>
      </MenuBar>
      <Banner>
        <Modes>
          <ModeButton $active>
            <Icon $s={24} $ml={1}><circle cx="12" cy="12" r="11.3" fill="#2b7fc4" /><path d="M4 5c3-4 9-4 10-2-3 2-2 4-4 5s-1 4 1 5c1 3-1 5-2 8C4 19 1 12 4 5z" fill="#5fbb46" /><path d="M16 5c4 1 6 5 6 8-2 4-4 3-5 1s-3-1-3-4 2-2 2-5z" fill="#49a63c" /><ellipse cx="10" cy="5" rx="6" ry="3" fill="#fff" opacity=".35" /></Icon>
            <span>Overview</span>
          </ModeButton>
          <ModeButton>
            <Icon $s={24} $ml={1}><rect x="1" y="1" width="22" height="22" fill="#dff6fd" stroke="#4cb4d8" strokeWidth="1.5" /><path d="M1.500 2h21v4h-21zM1.500 6H5v16.500H1.500z" fill="#56c5ea" /><path d="M5 10h17M5 14h17M5 18h17M10 6v16M14 6v16M18 6v16" stroke="#9bd7ea" /></Icon>
            <span>Data Laboratory</span>
          </ModeButton>
          <ModeButton>
            <Icon $s={24} $ml={2}><rect x="1" y="1.500" width="22" height="16" rx="1" fill="#eee" stroke="#888" /><path d="M3.500 4h17v11h-17z" fill="#3f94dd" /><path d="M3.500 4h17L3.500 12z" fill="#74b8ee" /><path d="M10 18h4v3h2.500v2.500h-9V21H10z" fill="#d8d8d8" stroke="#888" /></Icon>
            <span>Preview</span>
          </ModeButton>
        </Modes>
        <BannerLogo viewBox="344 96 660 162" fill="none">
          <g stroke="#070b0c" strokeWidth="12">
            <path d="M353 92C385 160 425 184 475 183C535 180 590 140 632 94" />
            <path d="M383 262C398 215 480 210 516 262" />
            <path d="M690 92C715 122 745 122 798 96" />
            <path d="M848 108 880 94" strokeWidth="9" />
            <path d="M560 240C600 275 665 240 725 180" strokeWidth="11" />
          </g>
          <path d="M513 96C506 140 507 190 530 222C545 245 565 256 600 262L600 252C570 250 552 235 546 205C540 170 548 135 560 96Z" fill="#070b0c" />
          <path d="M690 258C694 240 700 225 706 207L695 204C740 150 770 127 821 126L820 134C780 145 755 190 745 258Z" fill="#070b0c" />
          <path d="M812 258C815 190 825 122 890 121C960 121 972 180 966 258H920C927 195 925 160 882 159C850 160 841 200 842 258Z" fill="#070b0c" />
        </BannerLogo>
      </Banner>
      <WorkspaceBar>
        <WorkspaceTab $w={175}><WorkspaceIcon /><Label $ml={6} $w={115} $pt={3} $ls={0.1}>Workspace 1</Label><Cross /></WorkspaceTab>
        <WorkspaceTab $w={175} $active><WorkspaceIcon /><Label $ml={6} $w={115} $pt={1} $ls={0.1}>Workspace 2</Label><Cross /></WorkspaceTab>
        <Spacer />
        <Pager><Left /><Right /><Down /></Pager>
      </WorkspaceBar>
      <Main>
        <Column><Appearance /><LayoutPanel /></Column>
        <GraphPanel />
        <RightColumn />
      </Main>
      <Taskbar>
        <TaskGroup>
          <Icon $ml={15}><path d="M0 3.500 10 2v9.500H0zM11.500 1.800 24 0v11.500H11.500zM0 12.800h10V22L0 20.500zM11.500 12.800H24V24l-12.500-1.800z" fill="#fff" /></Icon>
          <Icon $ml={30} $s={25}><circle cx="15" cy="8.500" r="7.800" stroke="#fff" strokeWidth="1.4" /><path d="m9.500 14.500-9 9" stroke="#fff" strokeWidth="1.5" /></Icon>
        </TaskGroup>
        <TaskGroup>
          <Task $run $w={56}>
            <Icon><path d="M1 3h10v4H1z" fill="#e0a100" /><path d="M1 6h10l1.500-1.500H23V21H1z" fill="#ffd35c" /><path d="M5 13h14v9h-4v-4.500H9V22H5z" fill="#3a97e0" /></Icon>
          </Task>
          <Task>
            <Icon><circle cx="14" cy="4.500" r="3.500" fill="#7b83eb" /><circle cx="21" cy="5" r="2.500" fill="#5059c9" /><path d="M17 8.500h7V16c0 5-7 5-7 0z" fill="#5059c9" /><path d="M9 8.500h9.500V17c0 7-9.500 7-9.500 0z" fill="#7b83eb" /><path d="M0 5.500h14v13H0z" fill="#464eb8" /><Letter ch="T" x="7" y="16" size="12" fill="#fff" family="Liberation Sans" /></Icon>
          </Task>
          <Task $run>
            <Icon><circle cx="12" cy="12" r="12" fill="#ffcd40" /><path d="M12 12 1.600 6A12 12 0 0 1 22.400 6H12z" fill="#e04330" /><path d="M12 12 1.600 6A12 12 0 0 0 12 24l5.200-9z" fill="#229e50" /><path d="M12 6h10.400A12 12 0 0 1 12 24l5.200-9z" fill="#ffcd40" /><circle cx="12" cy="12" r="5.800" fill="#fff" /><circle cx="12" cy="12" r="4.600" fill="#2f79e8" /></Icon>
          </Task>
          <Task>
            <Icon><path d="M17.500 0 24 3v18l-6.500 3z" fill="#2cb0f4" /><path d="M17.500 0v7L3 18.500.3 17v-2z" fill="#0a76bd" /><path d="M17.500 24v-7L3 5.500.3 7v2z" fill="#1d93dc" /></Icon>
          </Task>
          <Task $w={55}>
            <Icon $s={23}><path d="M7 20c2 5 8 5 10 0z" fill="#9aa6c0" /><path d="m12 .8 9 4.500v11L12 22l-9-5.700v-11z" fill="#123062" stroke="#dce5ef" strokeWidth="1.4" /><path d="m3 5.500 9 5 9-5M12 10.500V22" stroke="#eef4fa" strokeWidth="1.8" /><path d="m7 5.500 5-2.500 5 2.500-5 2.500z" fill="#23539a" /></Icon>
          </Task>
          <Task $split $w={61}>
            <Icon><path d="M0 3h9l2 6-1.500 5L8 21H5z" fill="#e6200f" /><path d="M5 3h3l5 12-3.500 6z" fill="#ff4a26" /><path d="M9 3h5v3l-3 6z" fill="#ff5a28" /><path d="M12 21 18 3h6l-7.500 18z" fill="#ff5a28" /><path d="M11 12 14 3h4l-5.500 16z" fill="#d81e0c" /></Icon>
          </Task>
          <Task $run $active $w={55}><AppIcon /></Task>
        </TaskGroup>
        <TaskGroup>
          <Icon $s={19} $h={12} $ml={7} viewBox="0 0 19 12"><path d="m.8 10.500 8.700-9 8.700 9" stroke="#fff" strokeWidth="1.4" /></Icon>
          <Icon $ml={15} $s={24}><path d="M5.500 3.500C8 0 15 0 17.500 3.500M5.500 20.500c2.500 3.500 9.500 3.500 12 0" stroke="#fff" strokeWidth="1.1" /><rect x="4" y="6.500" width="11" height="11" rx="2" stroke="#fff" strokeWidth="1.3" /><path d="m15 11 4.500-3.500v9L15 13.500" stroke="#fff" strokeWidth="1.2" /></Icon>
          <Icon $ml={11} $s={25}><path d="M6 8h15.500v10H7" stroke="#fff" strokeWidth="1.3" /><path d="M8.500 10h11v6h-11zM22 11h1.800v4H22z" fill="#fff" /><path d="M2 2v3M6 2v3M.8 5.500h6.400v3C7 11 1 11 .8 8.500zM4 11v7h4" stroke="#fff" strokeWidth="1.2" /></Icon>
          <Icon $ml={14} $s={24}><path d="M1.500 22C1.500 12 9 3.500 20 3.500M6 22C6 14 12 8.500 20 8.500M10.500 22c0-5 4-9 9.500-9M15 22c0-2.500 2-4.500 5-4.500" stroke="#cfd3da" strokeWidth="1.3" /><circle cx="18.500" cy="20.500" r="1.6" fill="#fff" /></Icon>
          <Label $ml={14} $w={61} $size={16.4}>ENG</Label>
          <Label $w={98} $size={17} $ls={0.1}>1:06 PM</Label>
          <Icon><path d="M0 0h24v19h-8l-5 5-4.500-5H0z" fill="#fff" /><path d="M5 5.500h14M5 9.500h14M5 13.500h9" stroke="#272e3b" strokeWidth="1.3" /></Icon>
          <ShowDesktop />
        </TaskGroup>
      </Taskbar>
    </Screen>
  );
}
